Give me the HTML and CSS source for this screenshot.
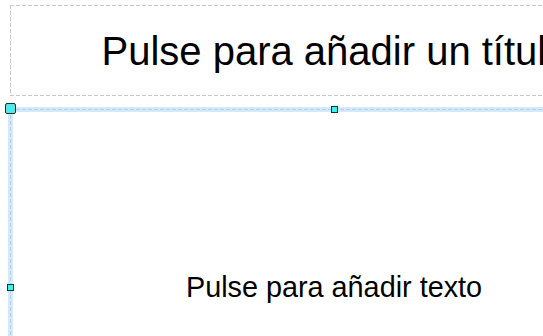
FILE: index.html
```html
<!DOCTYPE html>
<html lang="es">
<head>
    <meta charset="UTF-8">
    <meta name="viewport" content="width=device-width, initial-scale=1.0">
    <title>Diapositiva</title>
    <link rel="stylesheet" href="styles.css">
</head>
<body>
    <div class="editor">
        <div class="slide">
            <div class="title-box">
                <span class="title-text">Pulse para añadir un título</span>
            </div>

            <div class="body-box">
                <span class="body-text">Pulse para añadir texto</span>
                <span class="handle handle-corner"></span>
                <span class="handle handle-top"></span>
                <span class="handle handle-left"></span>
            </div>
        </div>
    </div>
</body>
</html>
```

FILE: styles.css
```css
body {
    margin: 0;
    background-color: #fff;
    font-family: "Liberation Sans", Arial, sans-serif;
    color: #000;
}

.editor {
    width: 543px;
    height: 336px;
    overflow: hidden;
}

.slide {
    width: 648px;
    margin-left: 10px;
    padding-top: 5px;
}

/* title placeholder, grey dashed outline */
.title-box {
    height: 91px;
    box-sizing: border-box;
    display: flex;
    align-items: center;
    justify-content: center;
    background:
        repeating-linear-gradient(90deg, #c8c8c8 0 4px, transparent 4px 6px) top left / 100% 1px no-repeat,
        repeating-linear-gradient(90deg, #c8c8c8 0 4px, transparent 4px 6px) bottom left / 100% 1px no-repeat,
        repeating-linear-gradient(180deg, #c8c8c8 0 4px, transparent 4px 6px) top left / 1px 100% no-repeat,
        repeating-linear-gradient(180deg, #c8c8c8 0 4px, transparent 4px 6px) top right / 1px 100% no-repeat;
}

.title-text {
    font-size: 40px;
    white-space: nowrap;
    margin-top: 2px;
    margin-left: 2px;
}

/* body placeholder, selected */
.body-box {
    position: relative;
    margin-top: 11px;
    margin-left: -2px;
    width: 652px;
    height: 360px;
    box-sizing: border-box;
    border: 5px solid #d4e9f9;
    display: flex;
    align-items: center;
    justify-content: center;
}

.body-box::before {
    content: "";
    position: absolute;
    inset: -3px;
    background:
        repeating-linear-gradient(90deg, #b4d0e6 0 4px, transparent 4px 6px) top left / 100% 1px no-repeat,
        repeating-linear-gradient(90deg, #b4d0e6 0 4px, transparent 4px 6px) bottom left / 100% 1px no-repeat,
        repeating-linear-gradient(180deg, #b4d0e6 0 4px, transparent 4px 6px) top left / 1px 100% no-repeat,
        repeating-linear-gradient(180deg, #b4d0e6 0 4px, transparent 4px 6px) top right / 1px 100% no-repeat;
}

.body-text {
    font-size: 28.8px;
    white-space: nowrap;
}

.handle {
    position: absolute;
    box-sizing: border-box;
    width: 7px;
    height: 7px;
    background-color: #3ff0ee;
    border: 1px solid #10382e;
}

.handle-corner {
    width: 11px;
    height: 11px;
    left: -8px;
    top: -9px;
    border-radius: 2px;
    box-shadow: inset 0 0 0 1px #7ad8d0;
}

.handle-top {
    left: 318px;
    top: -6px;
}

.handle-left {
    left: -6px;
    top: 172px;
}
```
